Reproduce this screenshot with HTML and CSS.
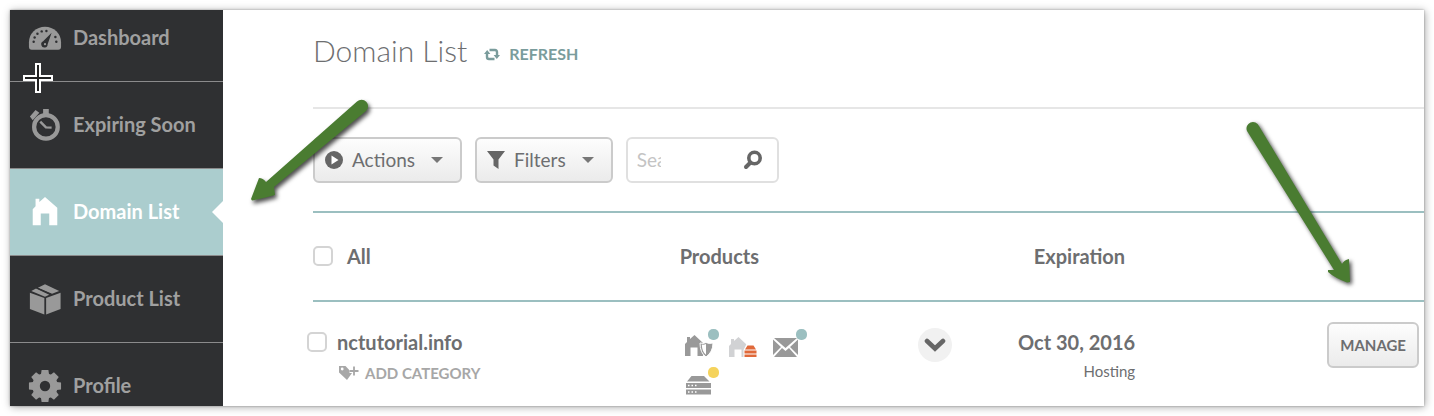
FILE: index.html
```html
<!DOCTYPE html>
<html lang="en">
<head>
  <meta charset="utf-8">
  <meta name="viewport" content="width=device-width">
  <title>Domain List</title>
  <link rel="stylesheet" href="styles.css">
</head>
<body>
  <div class="panel">
    <nav class="sidebar">
      <a class="nav-item" href="#">
        <svg class="nav-icon" viewBox="0 0 36 36">
          <path d="M4 30.500Q1 30.500 1 27V22.500A17 16.500 0 0 1 35 22.500V27Q35 30.500 32 30.500Z" fill="#999"/>
          <g fill="#2f3032">
            <circle cx="6" cy="22" r="1.300"/><circle cx="7" cy="17.500" r="1.300"/><circle cx="10" cy="13.500" r="1.300"/><circle cx="14.500" cy="11" r="1.300"/><circle cx="19.500" cy="10.500" r="1.300"/><circle cx="29" cy="17" r="1.300"/><circle cx="30" cy="22" r="1.300"/>
            <path d="M25 12.500L20.800 24.500A3.400 3.400 0 1 1 16 21.500Z"/>
          </g>
          <circle cx="18" cy="24.500" r="1.200" fill="#999"/>
        </svg>
        <span>Dashboard</span>
      </a>
      <a class="nav-item" href="#">
        <svg class="nav-icon" viewBox="0 0 36 36">
          <circle cx="19" cy="20" r="12.500" fill="none" stroke="#999" stroke-width="4.500"/>
          <path d="M16 1h6v6h-6zM2 9l6-7 4 3-7 8z" fill="#999"/>
          <path d="M13 14.500L19 20.500L25 20.800" fill="none" stroke="#999" stroke-width="2.600"/>
        </svg>
        <span>Expiring Soon</span>
      </a>
      <a class="nav-item active" href="#">
        <svg class="nav-icon" viewBox="0 0 36 36">
          <path d="M5 32V15L8 12V4H12V7.500L18 2L31 13.500V32H22.500V19.500H13.500V32Z" fill="#fff"/>
        </svg>
        <span>Domain List</span>
      </a>
      <a class="nav-item" href="#">
        <svg class="nav-icon" viewBox="0 0 36 36" fill="#999">
          <path d="M2 11.500L17.300 17V34.500L2 28.500ZM34.500 11.500L19.200 17V34.500L34.500 28.500ZM3.500 9.500L8.500 7L22.500 13.500L18 15.600ZM10.500 6L18 2.500L33 9.500L25.500 12.500Z"/>
          <path d="M9 6L24 13" stroke="#2f3032" stroke-width="1.200"/>
        </svg>
        <span>Product List</span>
      </a>
      <a class="nav-item" href="#">
        <svg class="nav-icon" viewBox="-18 -18 36 36" fill="#999">
          <g id="teeth"><path d="M-3.600-17H3.600L4.600-10H-4.600ZM-3.600 17H3.600L4.600 10H-4.600ZM-17-3.600V3.600L-10 4.600V-4.600ZM17-3.600V3.600L10 4.600V-4.600Z"/></g>
          <use href="#teeth" transform="rotate(45)"/>
          <circle r="9.500" fill="none" stroke="#999" stroke-width="8"/>
        </svg>
        <span>Profile</span>
      </a>
    </nav>

    <main class="main">
      <header class="page-head">
        <h1>Domain List</h1>
        <a class="refresh" href="#">
          <svg width="16" height="13" viewBox="0 0 16 13">
            <path d="M3 5V9Q3 11 5 11H10.500M13 8V4Q13 2 11 2H5.500" fill="none" stroke="#7a9c9c" stroke-width="2.400"/>
            <path d="M0 6L3.200 2L6.400 6ZM9.600 7H16L12.800 11Z" fill="#7a9c9c"/>
          </svg>
          REFRESH
        </a>
      </header>

      <div class="toolbar">
        <button class="btn" type="button">
          <svg width="20" height="20" viewBox="0 0 20 20"><circle cx="10" cy="10" r="9" fill="#666"/><path d="M7.500 5.500L14.500 10L7.500 14.500Z" fill="#fff"/></svg>
          <span class="btn-text">Actions</span>
          <span class="caret"></span>
        </button>
        <button class="btn" type="button">
          <svg width="20" height="20" viewBox="0 0 20 20"><path d="M1 1H19L12.500 9.500V19L7.500 15.500V9.500Z" fill="#666"/></svg>
          <span class="btn-text">Filters</span>
          <span class="caret"></span>
        </button>
        <div class="search">
          <input type="text" placeholder="Search" aria-label="Search">
          <button type="button" aria-label="Find">
            <svg width="20" height="20" viewBox="0 0 20 20"><circle cx="11.500" cy="8" r="5.700" fill="none" stroke="#666" stroke-width="3.600"/><path d="M7.500 12.500L3 17" stroke="#666" stroke-width="4" stroke-linecap="round"/></svg>
          </button>
        </div>
      </div>

      <table class="domains">
        <thead>
          <tr>
            <th class="col-name"><label class="check-all"><input type="checkbox"> All</label></th>
            <th class="col-products">Products</th>
            <th class="col-toggle"></th>
            <th class="col-date">Expiration</th>
            <th class="col-manage"></th>
          </tr>
        </thead>
        <tbody>
          <tr>
            <td>
              <label class="domain"><input type="checkbox"> nctutorial.info</label>
              <a class="add-category" href="#">
                <svg width="20" height="16" viewBox="0 0 20 16"><path d="M0 1H6.500L13 8L8 15L0 7.500Z" fill="#a7a7a7"/><circle cx="3.200" cy="4" r="1.400" fill="#fff"/><path d="M15 1.500V10.500M10.500 6H19.500" stroke="#fff" stroke-width="4"/><path d="M15 1.500V10.500M10.500 6H19.500" stroke="#a7a7a7" stroke-width="1.800"/></svg>
                ADD CATEGORY
              </a>
            </td>
            <td>
              <div class="products">
                <span class="product">
                  <svg width="30" height="24" viewBox="0 0 30 24"><path d="M1 23V11L3 9V4H6V6L10.500 2L19 10V23H13.500V14.500H6.500V23Z" fill="#999"/><path d="M16 10Q19 11 22 9.500Q25 11 29 10Q29 19 22 24Q16 20 16 10Z" fill="#999" stroke="#fff"/><path d="M17.800 11.500Q20 12 22 11V21.800Q18 18.500 17.800 11.500Z" fill="#fff"/></svg>
                  <i class="dot teal"></i>
                </span>
                <span class="product">
                  <svg width="30" height="24" viewBox="0 0 30 24"><path d="M1 25V13L3 11V6H6V8L10.500 4L19 12V25H13.500V16.500H6.500V25Z" fill="#d1d2d4"/><path d="M15.500 24V17L18.500 11H26L29 17V24Z" fill="#fff"/><path d="M16.500 24V21.500H28.500V24ZM16.500 20.500V17.500H28.500V20.500ZM17 16.500L19.500 12.500H25.500L28 16.500Z" fill="#e0693a"/></svg>
                </span>
                <span class="product">
                  <svg width="30" height="24" viewBox="0 0 30 24"><path d="M2 5H25L13.500 15ZM1 6.500L9 14L1 22ZM26 6.500L18 14L26 22ZM10 15L13.500 18L17 15L25 24H2Z" fill="#999"/></svg>
                  <i class="dot teal"></i>
                </span>
                <span class="product">
                  <svg width="30" height="24" viewBox="0 0 30 24"><path d="M7.500 5H20L25.500 10.500H3ZM2 12H27V17H2ZM2 18.500H27V23.500H2Z" fill="#999"/><path d="M4 14.500H13M4 21H13" stroke="#fff" stroke-width="1.500" stroke-dasharray="1.500 2"/></svg>
                  <i class="dot yellow"></i>
                </span>
              </div>
            </td>
            <td>
              <button class="toggle" type="button" aria-label="Show details">
                <svg width="22" height="16" viewBox="0 0 22 16"><path d="M3 4L11 11.500L19 4" fill="none" stroke="#666" stroke-width="4.600" stroke-linecap="round"/></svg>
              </button>
            </td>
            <td class="expires">
              <strong>Oct 30, 2016</strong>
              <span>Hosting</span>
            </td>
            <td class="manage"><button class="btn btn-manage" type="button">MANAGE</button></td>
          </tr>
        </tbody>
      </table>
    </main>

    <!-- tutorial markers drawn over the page -->
    <svg class="marker cross" width="32" height="32" viewBox="0 0 32 32">
      <path d="M16 1V31M1 16H31" stroke="#fff" stroke-width="6"/>
      <path d="M16 3V29M3 16H29" stroke="#222" stroke-width="2"/>
    </svg>
    <svg class="marker arrow-left" width="130" height="112" viewBox="0 0 130 112">
      <path d="M117 3.500A6 6 0 0 1 126 13L34 89L35 97Q25 100 12 102.500L11 101L19 80Q23 80 26 84Z" fill="#4a7c31"/>
    </svg>
    <svg class="marker arrow-right" width="120" height="174" viewBox="0 0 120 174">
      <path d="M17 11A6 6 0 0 1 29 6L112 144Q114 140 119 139L120 162L117 162.500Q105 158 98 152V150H104Z" fill="#4a7c31"/>
    </svg>
  </div>
</body>
</html>
```
FILE: styles.css
```css
:root {
  --dark: #2f3032;
  --teal: #abcdce;
  --line: #9bbfc0;
  --text: #6d6e70;
}

* {
  box-sizing: border-box;
}

body {
  margin: 0;
  padding: 10px;
  background: #fff;
  color: var(--text);
  font-family: Lato, 'Open Sans', sans-serif;
}

a {
  text-decoration: none;
}

button,
input {
  font-family: inherit;
}

.panel {
  position: relative;
  display: grid;
  grid-template-columns: 213px 1fr;
  background: #fff;
  box-shadow: 0 0 2px rgba(0, 0, 0, 0.3), 1px 1px 8px rgba(0, 0, 0, 0.35);
}

.sidebar {
  background: var(--dark);
}

.nav-item {
  position: relative;
  display: flex;
  align-items: center;
  gap: 11px;
  padding: 28px 18px;
  border-bottom: 1px solid #8b8b8c;
  color: #a0a0a0;
  font-size: 20px;
  font-weight: 700;
  line-height: 28px;
}

.nav-item span {
  padding-bottom: 2px;
}

.nav-item:first-child {
  padding-top: 13px;
}

.nav-item:last-child {
  padding-bottom: 5px;
  border-bottom: none;
}

.nav-icon {
  width: 34px;
  height: 34px;
  margin: -2px 0;
}

.nav-item.active {
  background: var(--teal);
  color: #fff;
}

.nav-item.active::after {
  content: "";
  position: absolute;
  right: 0;
  top: 32px;
  border: 11px solid transparent;
  border-left: none;
  border-right-color: #fff;
}

.main {
  padding-left: 90px;
}

.page-head {
  display: flex;
  align-items: center;
  gap: 17px;
  padding: 22px 0 39px;
  border-bottom: 2px solid #e6e6e6;
}

h1 {
  margin: 0;
  font-size: 30px;
  font-weight: 300;
  line-height: 36px;
}

.refresh {
  display: flex;
  align-items: center;
  gap: 9px;
  padding-top: 8px;
  color: #7a9c9c;
  font-size: 16px;
  font-weight: 700;
  line-height: 20px;
}

.toolbar {
  display: flex;
  gap: 13px;
  padding: 28px 0;
}

.btn {
  display: flex;
  align-items: center;
  gap: 8px;
  height: 46px;
  padding: 0 17px 0 9px;
  border: 2px solid #cbcbcb;
  border-radius: 6px;
  background: linear-gradient(#fdfdfd, #ebebeb);
  color: var(--text);
  font-size: 19px;
  font-weight: 400;
}

.btn-text {
  padding-bottom: 2px;
}

.caret {
  margin-left: 8px;
  border: 6px solid transparent;
  border-top-color: #777;
  border-bottom: none;
}

.search {
  display: flex;
  align-items: center;
  justify-content: space-between;
  width: 153px;
  height: 46px;
  padding: 0 14px 0 9px;
  border: 2px solid #e0e0e0;
  border-radius: 6px;
}

.search input {
  width: 24px;
  padding: 0 0 2px;
  border: none;
  outline: none;
  font-size: 19px;
}

.search input::placeholder {
  color: #c4c4c4;
}

.search button {
  display: flex;
  padding: 0;
  border: none;
  background: none;
}

.domains {
  width: 100%;
  table-layout: fixed;
  border-collapse: collapse;
}

.domains th {
  height: 89px;
  padding: 0 0 2px;
  border-top: 2px solid var(--line);
  border-bottom: 2px solid var(--line);
  font-size: 20px;
  font-weight: 700;
}

.domains td {
  padding: 20px 0 0;
  vertical-align: top;
}

.col-name {
  width: 33%;
}

.col-products {
  width: 21.5%;
  text-align: left;
}

.col-toggle {
  width: 5%;
}

.col-date {
  width: 14.5%;
}

.domains .col-date {
  padding-right: 10px;
  text-align: right;
}

.domains input {
  appearance: none;
  width: 20px;
  height: 20px;
  margin: 0;
  border: 2px solid #d4d4d4;
  border-radius: 5px;
  background: #fff;
}

.check-all,
.domain {
  display: flex;
  align-items: center;
}

.check-all {
  gap: 14px;
}

.domain {
  gap: 10px;
  margin-left: -6px;
  font-size: 20px;
  font-weight: 700;
  line-height: 40px;
}

.add-category {
  display: flex;
  align-items: center;
  gap: 6px;
  padding-left: 26px;
  color: #a7a7a7;
  font-size: 15px;
  font-weight: 700;
  line-height: 22px;
}

.products {
  display: grid;
  grid-template-columns: repeat(3, 30px);
  gap: 14px;
  padding: 11px 0 0 4px;
}

.product {
  position: relative;
  height: 24px;
}

.dot {
  position: absolute;
  top: -4px;
  right: -5px;
  width: 11px;
  height: 11px;
  border-radius: 5px;
}

.teal {
  background: #9bbfc0;
}

.yellow {
  background: #f5d35c;
}

.toggle {
  display: flex;
  align-items: center;
  justify-content: center;
  width: 34px;
  height: 34px;
  margin-top: 6px;
  padding: 0;
  border: none;
  border-radius: 50%;
  background: #f1f1f1;
}

.expires {
  text-align: right;
}

.expires strong,
.expires span {
  display: block;
}

.expires strong {
  font-size: 20px;
  line-height: 40px;
}

.expires span {
  font-size: 15px;
  line-height: 18px;
}

.btn-manage {
  margin: 0 5px 0 auto;
  padding: 0 11px;
  font-size: 15px;
  font-weight: 700;
}

.marker {
  position: absolute;
  pointer-events: none;
}

.cross {
  left: 12px;
  top: 52px;
}

.arrow-left {
  left: 230px;
  top: 88px;
  filter: drop-shadow(2px 3px 2px rgba(0, 0, 0, 0.7));
}

.arrow-right {
  left: 1220px;
  top: 110px;
  filter: drop-shadow(2px 2px 2px rgba(0, 0, 0, 0.7));
}
```
